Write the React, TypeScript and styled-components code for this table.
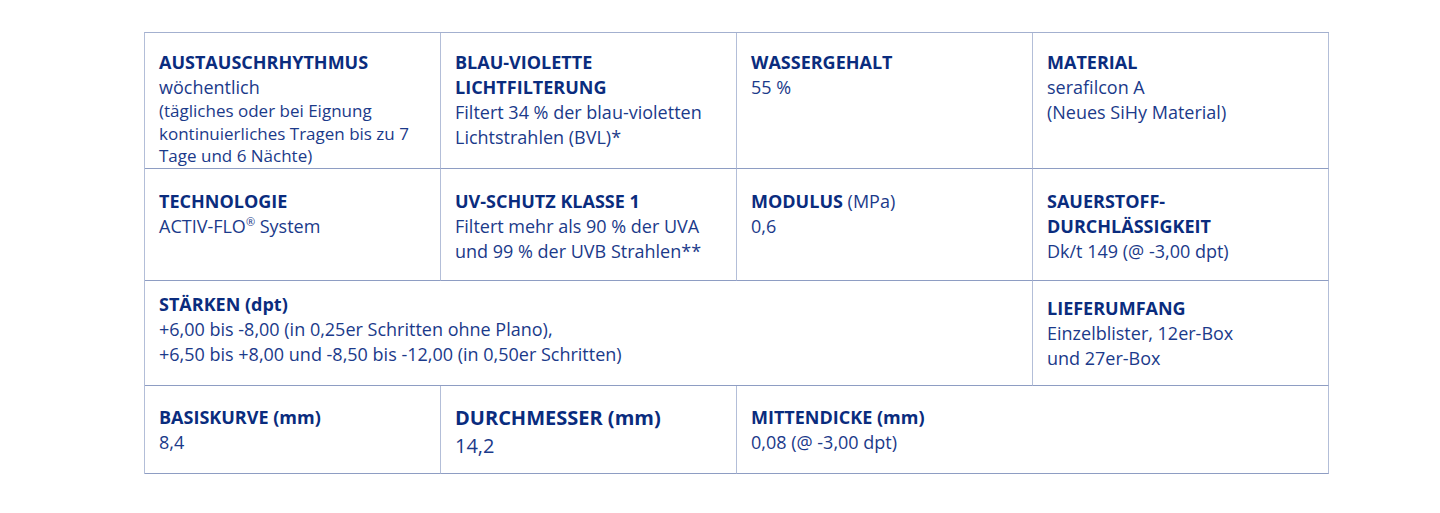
import React from "react";
import styled, { createGlobalStyle } from "styled-components";

const GlobalStyle = createGlobalStyle`
	* { box-sizing: border-box; }
	body {
		margin: 0;
		background: #ffffff;
		font-family: "Open Sans", "Liberation Sans", sans-serif;
	}
`;

const Page = styled.div`
	padding: 32px 0 0 144px;
	height: 513px;
`;

const Table = styled.div`
	display: grid;
	grid-template-columns: repeat(4, 296px);
	grid-template-rows: 136px 112px 105px 88px;
	width: 1185px;
	border-top: 1px solid #a3b0cf;
	border-left: 1px solid #b3bed8;
`;

const Cell = styled.div<{ $span?: number; $top: number }>`
	grid-column: span ${(p) => p.$span || 1};
	padding: ${(p) => p.$top}px 8px 0 14px;
	border-right: 1px solid #b3bed8;
	border-bottom: 1px solid #8e9dc3;
	color: #1b3a8a;
	font-size: 18px;
	line-height: 25px;
`;

const Label = styled.div<{ $big?: boolean }>`
	font-weight: 700;
	color: #0a2c7e;
	font-size: ${(p) => (p.$big ? "20px" : "18px")};
	line-height: ${(p) => (p.$big ? "28px" : "25px")};

	span {
		font-weight: 400;
		color: #1b3a8a;
	}
`;

const Value = styled.div<{ $big?: boolean }>`
	font-size: ${(p) => (p.$big ? "20px" : "18px")};
	line-height: ${(p) => (p.$big ? "28px" : "25px")};

	sup {
		font-size: 11px;
		line-height: 0;
		vertical-align: 7px;
	}
`;

const Note = styled.div`
	font-size: 17px;
	line-height: 23.5px;
	margin-top: -1px;
`;

type Item = {
	label: React.ReactNode;
	lines: React.ReactNode[];
	note?: string[];
	top: number;
	span?: number;
	big?: boolean;
};

const items: Item[] = [
	{
		label: "AUSTAUSCHRHYTHMUS",
		lines: ["wöchentlich"],
		note: [
			"(tägliches oder bei Eignung",
			"kontinuierliches Tragen bis zu 7",
			"Tage und 6 Nächte)",
		],
		top: 17,
	},
	{
		label: (
			<>
				BLAU-VIOLETTE
				<br />
				LICHTFILTERUNG
			</>
		),
		lines: ["Filtert 34 % der blau-violetten", "Lichtstrahlen (BVL)*"],
		top: 17,
	},
	{ label: "WASSERGEHALT", lines: ["55 %"], top: 17 },
	{
		label: "MATERIAL",
		lines: ["serafilcon A", "(Neues SiHy Material)"],
		top: 17,
	},
	{
		label: "TECHNOLOGIE",
		lines: [
			<>
				ACTIV-FLO<sup>®</sup> System
			</>,
		],
		top: 20,
	},
	{
		label: "UV-SCHUTZ KLASSE 1",
		lines: ["Filtert mehr als 90 % der UVA", "und 99 % der UVB Strahlen**"],
		top: 20,
	},
	{
		label: (
			<>
				MODULUS <span>(MPa)</span>
			</>
		),
		lines: ["0,6"],
		top: 20,
	},
	{
		label: (
			<>
				SAUERSTOFF-
				<br />
				DURCHLÄSSIGKEIT
			</>
		),
		lines: ["Dk/t 149 (@ -3,00 dpt)"],
		top: 20,
	},
	{
		label: "STÄRKEN (dpt)",
		lines: [
			"+6,00 bis -8,00 (in 0,25er Schritten ohne Plano),",
			"+6,50 bis +8,00 und -8,50 bis -12,00 (in 0,50er Schritten)",
		],
		top: 11,
		span: 3,
	},
	{
		label: "LIEFERUMFANG",
		lines: ["Einzelblister, 12er-Box", "und 27er-Box"],
		top: 15,
	},
	{ label: "BASISKURVE (mm)", lines: ["8,4"], top: 19 },
	{ label: "DURCHMESSER (mm)", lines: ["14,2"], top: 18, big: true },
	{ label: "MITTENDICKE (mm)", lines: ["0,08 (@ -3,00 dpt)"], top: 19, span: 2 },
];

const App = () => {
	return (
		<Page>
			<GlobalStyle />
			<Table>
				{items.map((item, i) => (
					<Cell key={i} $span={item.span} $top={item.top}>
						<Label $big={item.big}>{item.label}</Label>
						{item.lines.map((line, j) => (
							<Value key={j} $big={item.big}>
								{line}
							</Value>
						))}
						{item.note?.map((line, j) => (
							<Note key={"n" + j}>{line}</Note>
						))}
					</Cell>
				))}
			</Table>
		</Page>
	);
};

export default App;
